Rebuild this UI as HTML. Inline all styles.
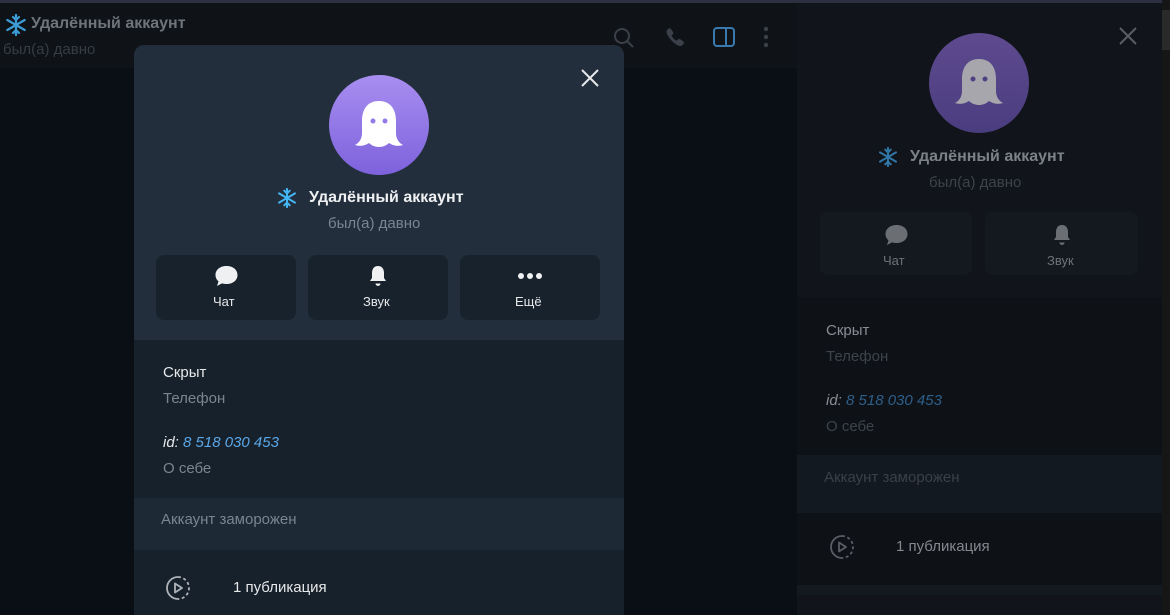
<!DOCTYPE html>
<html><head><meta charset="utf-8"><style>
*{margin:0;padding:0;box-sizing:border-box}
body{width:1170px;height:615px;overflow:hidden;background:#0a0e15;font-family:"Liberation Sans","DejaVu Sans",sans-serif;position:relative}
.abs{position:absolute}
.t{white-space:nowrap}
</style></head><body>
<div class="abs" style="left:0;top:0;width:1162px;height:3px;background:#2c3040"></div>
<div class="abs" style="left:0;top:3px;width:797px;height:65px;background:#0f1318"></div>
<svg class="abs" style="left:4px;top:13px" width="24" height="24" viewBox="0 0 24 24"><g stroke="#3d9bd6" stroke-width="2.2" stroke-linecap="round" fill="none"><path d="M12 2v20M3.3 7l17.4 10M3.3 17l17.4-10M9 4l3 3 3-3M9 20l3-3 3 3"/></g></svg>
<div class="abs t" style="left:31px;top:15px;font-size:16px;font-weight:bold;color:#6f747b">Удалённый аккаунт</div>
<div class="abs t" style="left:3px;top:41px;font-size:15px;color:#363c44">был(а) давно</div>
<svg class="abs" style="left:612px;top:26px" width="24" height="24" viewBox="0 0 24 24" fill="none" stroke="#3b4048" stroke-width="2"><circle cx="10" cy="10" r="7"/><path d="M15 15l6 6"/></svg>
<svg class="abs" style="left:663px;top:26px" width="24" height="24" viewBox="0 0 24 24"><path d="M5 3c1-1 2-1 3 0l2 3c.6 1 .3 2-.5 2.6l-1 .8c1 2.3 3 4.4 5.3 5.4l.8-1c.6-.8 1.600-1 2.6-.5l3 2c1 .7 1 2 0 3l-1.500 1.500C15 22 3 11 3.500 5z" fill="#3b4048"/></svg>
<svg class="abs" style="left:712px;top:26px" width="24" height="22" viewBox="0 0 24 22" fill="none" stroke="#3a78ad" stroke-width="2"><rect x="2" y="2" width="20" height="18" rx="3"/><path d="M14 2v18"/></svg>
<svg class="abs" style="left:760px;top:26px" width="12" height="22" viewBox="0 0 12 22" fill="#3b4048"><circle cx="6" cy="3" r="2.2"/><circle cx="6" cy="11" r="2.2"/><circle cx="6" cy="19" r="2.2"/></svg>

<div class="abs" style="left:797px;top:3px;width:365px;height:612px;background:#11151b"></div>
<div class="abs" style="left:1162px;top:0;width:8px;height:615px;background:#161616"></div>
<div class="abs" style="left:1162px;top:10px;width:8px;height:40px;background:#2a2a2a"></div>
<svg class="abs" style="left:1118px;top:26px" width="20" height="20" viewBox="0 0 20 20" stroke="#5a5e64" stroke-width="2"><path d="M2 2l16 16M18 2L2 18"/></svg>
<div class="abs" style="left:929px;top:33px;width:100px;height:100px;border-radius:50%;background:linear-gradient(#5e4a8f,#4a3d7f)"></div>
<svg class="abs" style="left:953px;top:57px" width="52" height="52" viewBox="0 0 52 52"><path d="M26 2C14 2 9 11 9 22V34C9 40 6 44 2 46C8 48 13 46 16 44C19 47 23 48 26 48C29 48 33 47 36 44C39 46 44 48 50 46C46 44 43 40 43 34V22C43 11 38 2 26 2z" fill="#a8a6ad"/><circle cx="20" cy="22" r="2.5" fill="#4f4082"/><circle cx="32" cy="22" r="2.5" fill="#4f4082"/></svg>
<svg class="abs" style="left:877px;top:146px" width="22" height="22" viewBox="0 0 24 24"><g stroke="#2f77a6" stroke-width="2.2" stroke-linecap="round" fill="none"><path d="M12 2v20M3.3 7l17.4 10M3.3 17l17.4-10M9 4l3 3 3-3M9 20l3-3 3 3"/></g></svg>
<div class="abs t" style="left:910px;top:148px;font-size:16px;font-weight:bold;color:#7c8188">Удалённый аккаунт</div>
<div class="abs t" style="left:929px;top:174px;font-size:15px;color:#3d434b">был(а) давно</div>
<div class="abs" style="left:820px;top:212px;width:152px;height:63px;border-radius:8px;background:#141920"></div>
<div class="abs" style="left:985px;top:212px;width:153px;height:63px;border-radius:8px;background:#141920"></div>
<svg class="abs" style="left:884px;top:223px" width="25" height="24" viewBox="0 0 25 24"><path d="M12.5 2C6 2 1.5 5.8 1.5 11c0 2.6 1.2 4.8 3 6.4L3 22l5-2.6c1.4.4 2.9.6 4.5.6 6.5 0 11-3.8 11-9S19 2 12.5 2z" fill="#6b6e73"/></svg>
<div class="abs t" style="left:883px;top:253px;font-size:13px;color:#6e7277">Чат</div>
<svg class="abs" style="left:1051px;top:223px" width="22" height="24" viewBox="0 0 22 24"><path d="M11 2c-4 0-6 3-6 7v5l-2 3h16l-2-3V9c0-4-2-7-6-7zM8.5 19.5a2.5 2.5 0 005 0z" fill="#6b6e73"/></svg>
<div class="abs t" style="left:1047px;top:253px;font-size:13px;color:#6e7277">Звук</div>
<div class="abs" style="left:797px;top:297px;width:365px;height:158px;background:#0e1217"></div>
<div class="abs t" style="left:826px;top:322px;font-size:15px;color:#8a8d92">Скрыт</div>
<div class="abs t" style="left:826px;top:348px;font-size:15px;color:#3d434b">Телефон</div>
<div class="abs t" style="left:826px;top:392px;font-size:15px;font-style:italic;color:#8a8d92">id: <span style="color:#2e5f8a">8 518 030 453</span></div>
<div class="abs t" style="left:826px;top:418px;font-size:15px;color:#3d434b">О себе</div>
<div class="abs" style="left:797px;top:455px;width:365px;height:58px;background:#131921"></div>
<div class="abs t" style="left:824px;top:469px;font-size:15px;color:#3a4049">Аккаунт заморожен</div>
<div class="abs" style="left:797px;top:513px;width:365px;height:72px;background:#0e1217"></div>
<svg class="abs" style="left:829px;top:534px" width="26" height="26" viewBox="0 0 26 26" fill="none" stroke="#5a5e64" stroke-width="1.8"><path d="M13 2a11 11 0 010 22" stroke-dasharray="3 2.5"/><path d="M13 24A11 11 0 0113 2"/><path d="M10 8.5v9l7-4.5z" stroke-linejoin="round"/></svg>
<div class="abs t" style="left:896px;top:538px;font-size:15px;color:#85888d">1 публикация</div>
<div class="abs" style="left:797px;top:585px;width:365px;height:10px;background:#131921"></div>

<div class="abs" style="left:134px;top:45px;width:490px;height:570px;background:#232e3c;border-radius:10px 10px 0 0;overflow:hidden">
  <div class="abs" style="left:0;top:295px;width:490px;height:158px;background:#17212b"></div>
  <div class="abs" style="left:0;top:453px;width:490px;height:57px;background:#1e2936"></div>
  <div class="abs" style="left:0;top:505px;width:490px;height:70px;background:#17212b"></div>
</div>
<svg class="abs" style="left:580px;top:68px" width="20" height="20" viewBox="0 0 20 20" stroke="#e6e8ea" stroke-width="2"><path d="M2 2l16 16M18 2L2 18"/></svg>
<div class="abs" style="left:329px;top:75px;width:100px;height:100px;border-radius:50%;background:linear-gradient(#a88ef0,#7d62dc)"></div>
<svg class="abs" style="left:353px;top:99px" width="52" height="52" viewBox="0 0 52 52"><path d="M26 2C14 2 9 11 9 22V34C9 40 6 44 2 46C8 48 13 46 16 44C19 47 23 48 26 48C29 48 33 47 36 44C39 46 44 48 50 46C46 44 43 40 43 34V22C43 11 38 2 26 2z" fill="#fff"/><circle cx="20" cy="22" r="2.5" fill="#9479e8"/><circle cx="32" cy="22" r="2.5" fill="#9479e8"/></svg>
<svg class="abs" style="left:276px;top:187px" width="22" height="22" viewBox="0 0 24 24"><g stroke="#43b6f5" stroke-width="2.2" stroke-linecap="round" fill="none"><path d="M12 2v20M3.3 7l17.4 10M3.3 17l17.4-10M9 4l3 3 3-3M9 20l3-3 3 3"/></g></svg>
<div class="abs t" style="left:309px;top:189px;font-size:16px;font-weight:bold;color:#eef0f2">Удалённый аккаунт</div>
<div class="abs t" style="left:328px;top:215px;font-size:15px;color:#7b8591">был(а) давно</div>
<div class="abs" style="left:156px;top:255px;width:140px;height:65px;border-radius:8px;background:#18222d"></div>
<div class="abs" style="left:308px;top:255px;width:140px;height:65px;border-radius:8px;background:#18222d"></div>
<div class="abs" style="left:460px;top:255px;width:140px;height:65px;border-radius:8px;background:#18222d"></div>
<svg class="abs" style="left:214px;top:264px" width="25" height="24" viewBox="0 0 25 24"><path d="M12.5 2C6 2 1.5 5.8 1.5 11c0 2.6 1.2 4.8 3 6.4L3 22l5-2.6c1.4.4 2.9.6 4.5.6 6.5 0 11-3.8 11-9S19 2 12.5 2z" fill="#eef0f2"/></svg>
<div class="abs t" style="left:213px;top:294px;font-size:13px;color:#e6e8ea">Чат</div>
<svg class="abs" style="left:367px;top:264px" width="22" height="24" viewBox="0 0 22 24"><path d="M11 2c-4 0-6 3-6 7v5l-2 3h16l-2-3V9c0-4-2-7-6-7zM8.5 19.5a2.5 2.5 0 005 0z" fill="#eef0f2"/></svg>
<div class="abs t" style="left:363px;top:294px;font-size:13px;color:#e6e8ea">Звук</div>
<svg class="abs" style="left:517px;top:272px" width="26" height="8" viewBox="0 0 26 8" fill="#eef0f2"><circle cx="4" cy="4" r="3"/><circle cx="13" cy="4" r="3"/><circle cx="22" cy="4" r="3"/></svg>
<div class="abs t" style="left:515px;top:294px;font-size:13px;color:#e6e8ea">Ещё</div>
<div class="abs t" style="left:163px;top:364px;font-size:15px;color:#e6e8ea">Скрыт</div>
<div class="abs t" style="left:163px;top:390px;font-size:15px;color:#7b8591">Телефон</div>
<div class="abs t" style="left:163px;top:434px;font-size:15px;font-style:italic;color:#e6e8ea">id: <span style="color:#5aa7e8">8 518 030 453</span></div>
<div class="abs t" style="left:163px;top:460px;font-size:15px;color:#7b8591">О себе</div>
<div class="abs t" style="left:161px;top:511px;font-size:15px;color:#7b8591">Аккаунт заморожен</div>
<svg class="abs" style="left:165px;top:575px" width="26" height="26" viewBox="0 0 26 26" fill="none" stroke="#aeb3b9" stroke-width="1.8"><path d="M13 2a11 11 0 010 22" stroke-dasharray="3 2.5"/><path d="M13 24A11 11 0 0113 2"/><path d="M10 8.5v9l7-4.5z" stroke-linejoin="round"/></svg>
<div class="abs t" style="left:233px;top:579px;font-size:15px;color:#e6e8ea">1 публикация</div>
</body></html>
